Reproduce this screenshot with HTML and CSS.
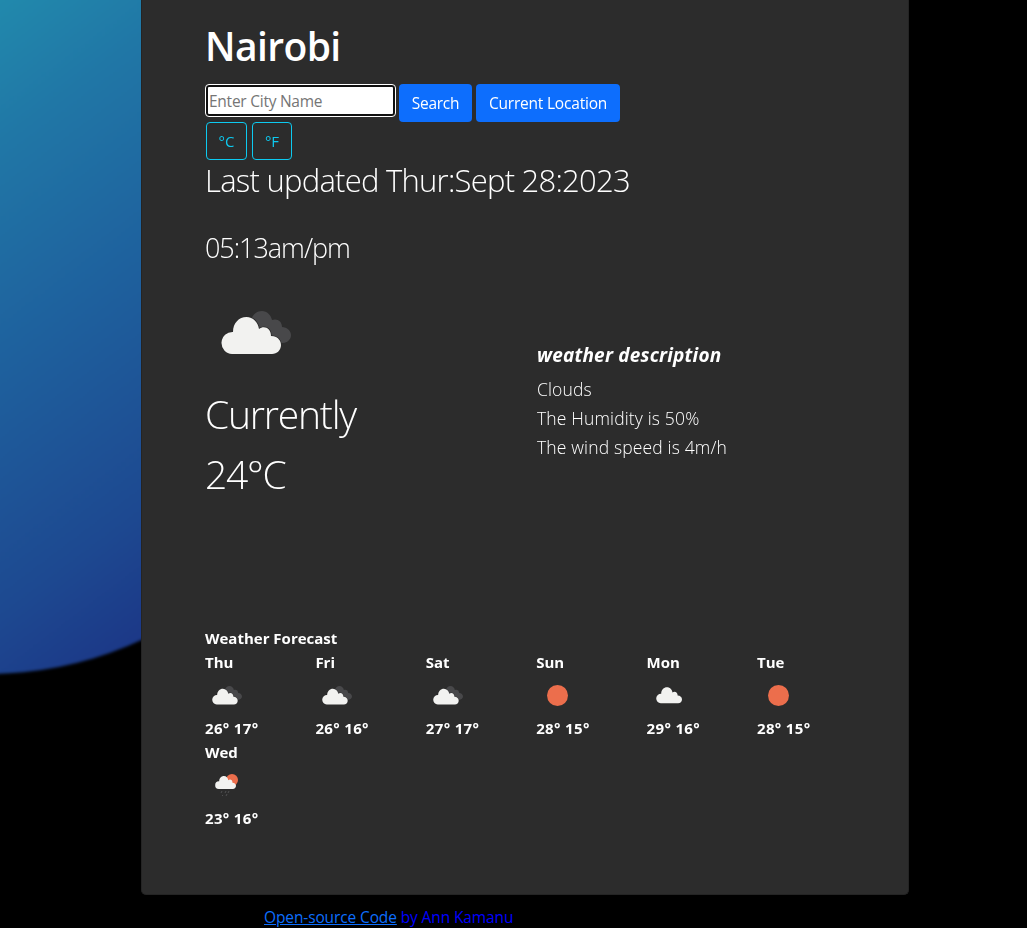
FILE: index.html
```html
<!DOCTYPE html>
<html lang="en">
<head>
<meta charset="utf-8">
<title>Weather</title>
<link rel="stylesheet" href="styles.css">
</head>
<body>
<svg class="defs" width="0" height="0">
  <defs>
    <path id="cloud" d="M11 37A11 11 0 0 1 12 15C12 6 18 0 25.500 0C32 0 37 5 38 12C43 8 50 11 50 19C56 19 60 23 60 28C60 33 56 37 51 37Z"/>
    <symbol id="clouds" viewBox="0 0 70 44">
      <path fill="#48484a" d="M30 9C32 3 36 0 41 0C46 0 50 4 51 9C56 7 61 10 61 16C66 16 70 20 70 24C70 29 66 32 61 32L40 24Z"/>
      <use href="#cloud" y="6" fill="#f2f2f0" stroke="#2c2c2c" stroke-width="1.500" paint-order="stroke"/>
    </symbol>
    <symbol id="single" viewBox="0 0 60 38"><use href="#cloud" fill="#f2f2f0"/></symbol>
    <symbol id="rain" viewBox="0 0 24 24">
      <circle cx="17" cy="6" r="6" fill="#ec6e4c"/>
      <use href="#cloud" transform="translate(0 2) scale(.35)" fill="#f2f2f0"/>
      <path d="M7 17l-1 2M11 17l-1 2M14 17l-1 2M8 21l-1 1M12 20l-1 2" stroke="#505052" stroke-width="1"/>
    </symbol>
  </defs>
</svg>
<div class="page">
  <div class="glow"></div>
  <main class="card">
    <h1 class="city">Nairobi</h1>
    <form class="search">
      <input class="field" type="text" placeholder="Enter City Name" autofocus>
      <button class="btn find" type="button">Search</button>
      <button class="btn locate" type="button">Current Location</button>
    </form>
    <div class="units"><button class="unit" type="button">°C</button><button class="unit fahr" type="button">°F</button></div>
    <h2 class="updated">Last updated Thur:Sept 28:2023</h2>
    <h3 class="time">05:13am/pm</h3>
    <div class="today">
      <section class="now">
        <svg class="now-icon" viewBox="0 0 70 44"><use href="#clouds"/></svg>
        <div class="big currently">Currently</div>
        <div class="big temp">24°C</div>
      </section>
      <section class="details">
        <h4 class="heading">weather description</h4>
        <p class="line">Clouds</p>
        <p class="line">The Humidity is 50%</p>
        <p class="line">The wind speed is 4m/h</p>
      </section>
    </div>
    <div class="title">Weather Forecast</div>
    <div class="forecast">
      <div class="day"><b>Thu</b><svg class="ico-clouds"><use href="#clouds"/></svg><b class="range">26° 17°</b></div>
      <div class="day"><b>Fri</b><svg class="ico-clouds"><use href="#clouds"/></svg><b class="range">26° 16°</b></div>
      <div class="day"><b>Sat</b><svg class="ico-clouds"><use href="#clouds"/></svg><b class="range">27° 17°</b></div>
      <div class="day"><b>Sun</b><i class="ico-sun"></i><b class="range">28° 15°</b></div>
      <div class="day"><b>Mon</b><svg class="ico-single"><use href="#single"/></svg><b class="range">29° 16°</b></div>
      <div class="day"><b>Tue</b><i class="ico-sun"></i><b class="range">28° 15°</b></div>
      <div class="day"><b>Wed</b><svg class="ico-rain"><use href="#rain"/></svg><b class="range">23° 16°</b></div>
    </div>
  </main>
  <footer class="foot"><a class="source" href="#">Open-source Code</a> by Ann Kamanu</footer>
</div>
</body>
</html>
```
FILE: styles.css
```css
* { box-sizing: border-box; }
body { margin: 0; background: #000; color: #fff; font: 15.5px/24px "Open Sans", "Noto Sans", sans-serif; }
h1, h2, h3, h4, p { margin: 0; white-space: nowrap; }
.defs { position: absolute; }
.page { position: relative; height: 928px; overflow: hidden; }
.glow { position: absolute; left: -381px; top: -62px; width: 736px; height: 736px; border-radius: 50%; filter: blur(1.5px); background: linear-gradient(143deg, #2189ac 27%, #2077a6 38%, #1e629e 54%, #1d4890 75%, #1b3686 86%); }
.card { position: relative; width: 768px; height: 895px; margin-left: 141px; padding: 22px 42px 0 63px; background: #2c2c2c; border: 1px solid #242424; border-top: 0; border-radius: 0 0 5px 5px; }
.city { height: 62px; font-size: 39px; font-weight: 600; line-height: 48px; letter-spacing: -.6px; }
.search { display: flex; align-items: flex-start; height: 38px; }
.field { width: 185px; height: 27px; margin: 3px 6px 0 3px; padding: 1px 1px; border: 0; border-radius: 1px; outline: 1px solid #fff; outline-offset: 2px; box-shadow: 0 0 0 2px #101010; background: #fff; color: #000; caret-color: #000; font: 15.5px/24px "Open Sans", sans-serif; letter-spacing: -.25px; }
.field::placeholder { color: #757575; opacity: 1; }
.btn { height: 38px; padding: 0; border: 0; border-radius: 4px; background: #0d6efd; color: #fff; font: 15.5px/24px "Open Sans", sans-serif; white-space: nowrap; }
.find { width: 73px; margin-right: 4px; letter-spacing: -.25px; }
.locate { width: 144px; letter-spacing: -.2px; }
.units { display: flex; gap: 5px; height: 38px; padding-left: 1px; }
.unit { width: 41px; height: 38px; padding: 0; border: 1px solid #0dcaf0; border-radius: 4px; background: transparent; color: #0dcaf0; font: 15px/24px "Open Sans", sans-serif; }
.fahr { width: 40px; }
.updated { height: 68px; font-size: 31px; font-weight: 320; line-height: 40px; letter-spacing: -.75px; }
.time { height: 83px; font-size: 27px; font-weight: 320; line-height: 40px; letter-spacing: -1.05px; }
.today { display: grid; grid-template-columns: 332px 1fr; height: 315px; }
.now-icon { display: block; width: 70px; height: 44px; margin: 0 0 36px 16px; }
.big { height: 60px; font-size: 39px; font-weight: 320; line-height: 46px; letter-spacing: -1.2px; }
.details { padding-top: 32px; }
.heading { margin-bottom: 8px; font-size: 19px; font-weight: 700; font-style: italic; line-height: 24px; letter-spacing: .2px; }
.line { font-size: 17.5px; font-weight: 330; line-height: 29px; letter-spacing: .15px; }
.title { font-weight: 700; font-size: 15px; }
.forecast { display: grid; grid-template-columns: repeat(6, 110.4px); }
.day { height: 90px; font-size: 15px; }
.day b { display: block; white-space: nowrap; }
.day .range { letter-spacing: .35px; }
.day svg, .day i { display: block; }
.ico-clouds { width: 30px; height: 19px; margin: 12px 0 11px 7px; }
.ico-sun { width: 21px; height: 21px; margin: 11px 0 10px 11px; border-radius: 50%; background: #ec6e4c; }
.ico-single { width: 26px; height: 17px; margin: 13px 0 12px 9px; }
.ico-rain { width: 24px; height: 24px; margin: 10px 0 8px 10px; }
.foot { margin: 10px 0 0 264px; color: #00f; white-space: nowrap; letter-spacing: -.12px; }
.source { color: #0d6efd; }
```
